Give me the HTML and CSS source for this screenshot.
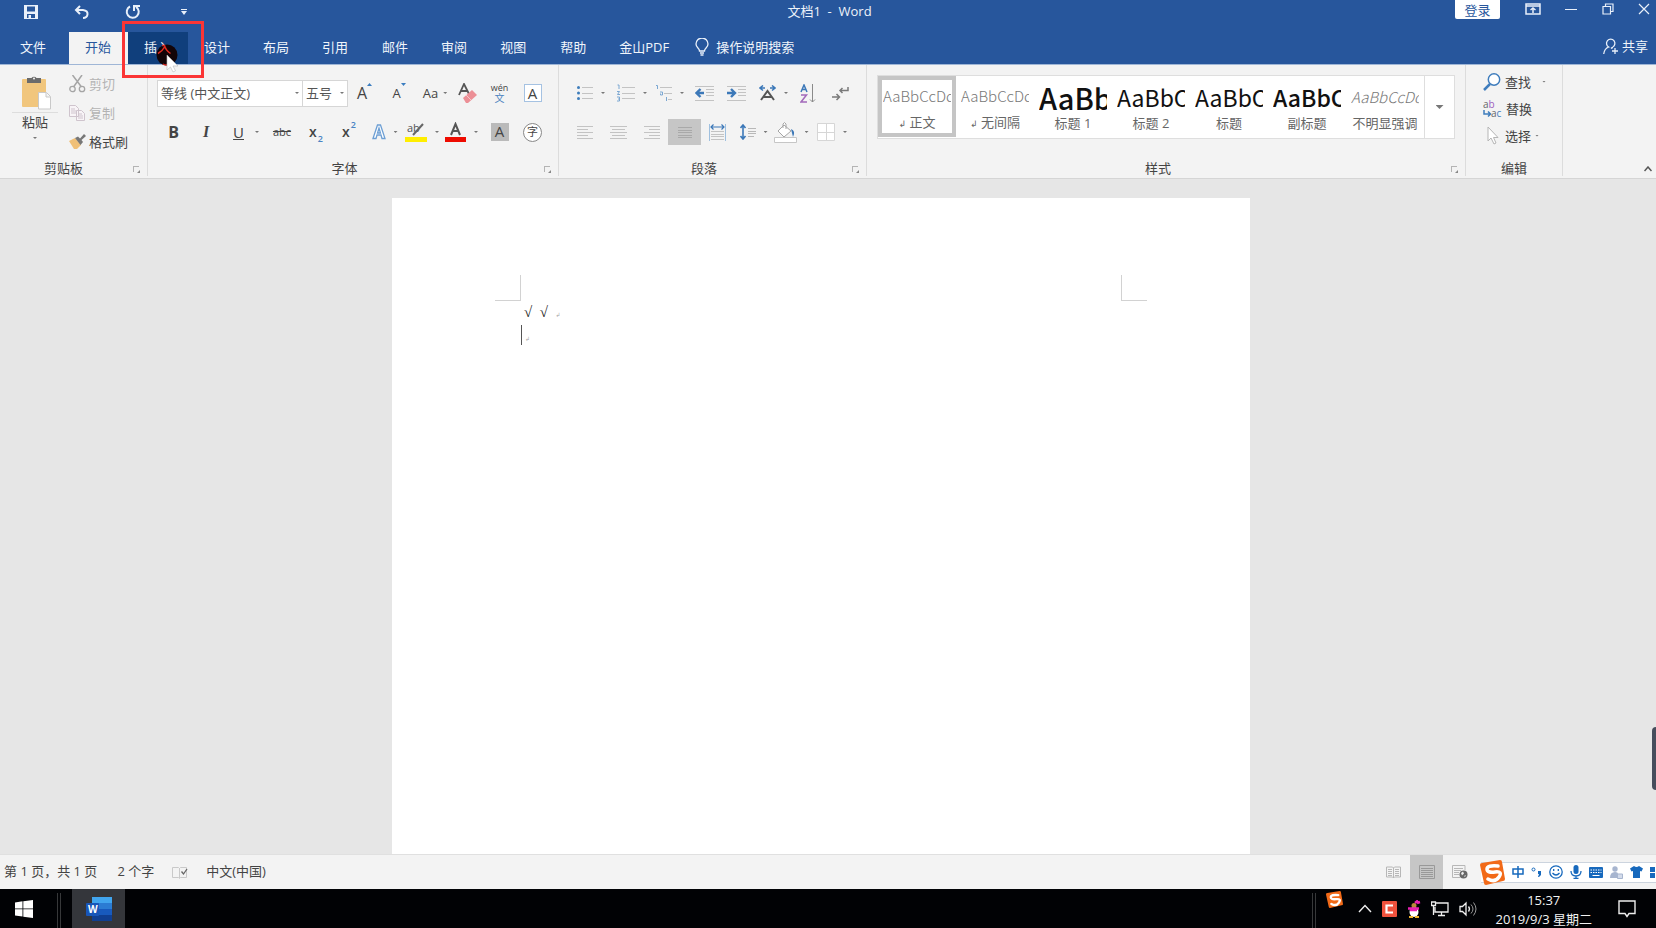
FILE: index.html
```html
<!DOCTYPE html>
<html lang="zh-CN">
<head>
<meta charset="utf-8">
<title>文档1 - Word</title>
<link rel="stylesheet" href="styles.css">
</head>
<body>
<div class="app">
<header class="titlebar">
  <div class="quick">
    <button aria-label="保存"><svg width="14" height="14" viewBox="0 0 14 14"><path fill="#e9f0fa" fill-rule="evenodd" d="M0 0H14V14H0ZM3 1.500V6.500H11V1.500ZM3 9V13H4.500V10H7V13H11V9Z"/></svg></button>
    <button aria-label="撤消"><svg width="16" height="14" viewBox="0 0 16 14"><path fill="none" stroke="#e9f0fa" stroke-width="2" d="M6 1L2 5l4 4M2 5h7c7 1 5 8 0 8"/></svg></button>
    <button aria-label="重复"><svg width="16" height="16" viewBox="0 0 16 16"><path fill="none" stroke="#e9f0fa" stroke-width="2" d="M5 2.500a6 6 0 1 0 6 .3M9 7V2h6"/></svg></button>
    <button aria-label="自定义快速访问工具栏"><svg width="6" height="6" viewBox="0 0 6 6"><path fill="#e9f0fa" d="M0 0h6v1H0zM0 2h6L3 6z"/></svg></button>
  </div>
  <h1>文档1&nbsp; -&nbsp; Word</h1>
  <div class="window">
    <button class="login">登录</button>
    <button aria-label="功能区显示选项"><svg width="16" height="12" viewBox="0 0 16 12"><path fill="none" stroke="#e9f0fa" stroke-width="1.500" d="M1 1h14v10H1zM1 3h14M8 10V5M5.500 7L8 5l2.500 2"/></svg></button>
    <button aria-label="最小化"><svg width="12" height="12" viewBox="0 0 12 12"><path stroke="#e9f0fa" d="M0 6.500h12"/></svg></button>
    <button aria-label="还原"><svg width="12" height="12" viewBox="0 0 12 12"><path fill="none" stroke="#e9f0fa" stroke-width="1.200" d="M1 3.500h7.500V11H1zM3.500 3V1H11v7.500H9"/></svg></button>
    <button aria-label="关闭"><svg width="12" height="12" viewBox="0 0 12 12"><path stroke="#e9f0fa" stroke-width="1.200" d="M1 1l10 10M11 1L1 11"/></svg></button>
  </div>
</header>
<nav class="tabs">
  <button class="file">文件</button><button class="active">开始</button><button class="hover">插入</button><button>设计</button><button>布局</button><button>引用</button><button>邮件</button><button>审阅</button><button>视图</button><button>帮助</button><button>金山PDF</button>
  <button class="tell"><svg width="14" height="18" viewBox="0 0 14 18"><path fill="none" stroke="#e9f0fa" stroke-width="1.300" d="M4.500 13c0-3-3.500-3-3.500-7a6 6 0 0 1 12 0c0 4-3.500 4-3.500 7zM5 15h4M5.500 17h3"/></svg>操作说明搜索</button>
  <button class="share"><svg width="16" height="17" viewBox="0 0 16 17"><path fill="none" stroke="#e9f0fa" stroke-width="1.300" d="M.7 16c.5-4 2-6 5-7a4.200 4.200 0 1 1 4 0M8 10.500c1-1 1.500-1 2-1M12 10v6M9 13h6"/></svg>共享</button>
  <div class="highlight-box"></div>
  <svg class="pointer" width="24" height="34" viewBox="0 0 24 34"><circle cx="11" cy="12" r="10.500" fill="#130508"/><path fill="none" stroke="#e02a20" stroke-width="1.500" d="M6 2.500h2.500c1 4 3 6 6 8M8.500 4C7 7 5 9 2 10.500M7 21q3 2 6 0"/><path fill="#fff" stroke="#bbb" stroke-width=".6" d="M11 12v15l3.500-3 2.500 5 2.500-1.200-2.500-4.800H22z"/></svg>
</nav>
<section class="ribbon">
  <div class="group clipboard">
    <div class="body">
      <button class="paste"><svg width="32" height="34" viewBox="0 0 32 34"><rect x="3" y="3" width="24" height="28" rx="1" fill="#f1c67d"/><path fill="#6b6b6b" d="M8 2h4.500a3 3 0 0 1 5 0H22v5H8z"/><circle cx="15" cy="2.500" r="1" fill="#f3f3f3"/><path fill="#fff" stroke="#c9c9c9" d="M19.500 16.500h8l4 4V33H19.500zM27 17v4h4"/></svg><span class="paste-label">粘贴</span><i class="arrow"></i></button>
      <div class="stack">
        <button class="dim"><svg width="17" height="18" viewBox="0 0 17 18"><path fill="none" stroke="#a5a5a5" stroke-width="1.500" d="M3.500 0l9 12M13 0L4.500 12"/><circle cx="3.500" cy="14" r="2.700" fill="none" stroke="#a5a5a5" stroke-width="1.300"/><circle cx="13" cy="14" r="2.700" fill="none" stroke="#a5a5a5" stroke-width="1.300"/></svg>剪切</button>
        <button class="dim"><svg width="17" height="18" viewBox="0 0 17 18"><path fill="#f8f4f7" stroke="#cfc4cd" d="M.5 1.500h6l3 3v8h-9zM7.500 6.500h5l3 3v7h-8zM2 5h4M2 7h5M2 9h5M9 10h4M9 12h5M9 14h5"/></svg>复制</button>
        <button><svg width="17" height="16" viewBox="0 0 17 16"><path fill="#f0c078" d="M0 7l6-3 6 7-4 4H5z"/><path fill="#777" d="M6 4l3-1.500 2 2L15 0l2 2-4.500 4 1.500 2-2.500 3z"/></svg>格式刷</button>
      </div>
    </div>
    <footer>剪贴板<i class="launcher"></i></footer>
  </div>
  <div class="group font">
    <div class="body column">
      <div class="tools font-one">
        <div class="combo"><input class="family" aria-label="字体" value="等线 (中文正文)"><i class="arrow"></i></div>
        <div class="combo"><input class="size" aria-label="字号" value="五号"><i class="arrow"></i></div>
        <button class="a-up" aria-label="增大字号">A<svg width="5" height="3" viewBox="0 0 5 3"><path fill="#3b7dc0" d="M0 3h5L2.500 0z"/></svg></button>
        <button class="a-down" aria-label="减小字号">A<svg width="5" height="3" viewBox="0 0 5 3"><path fill="#3b7dc0" d="M0 0h5L2.500 3z"/></svg></button>
        <button class="aa">Aa<i class="arrow"></i></button>
        <button aria-label="清除格式"><svg width="20" height="20" viewBox="0 0 20 20"><path fill="none" stroke="#555" stroke-width="1.800" d="M1 12L6 1l5 10M3 8h6"/><path fill="#ec8f96" d="M5 15l9-8 5 5-9 8H8z"/><path stroke="#f7c5c9" d="M8 12l5 5"/></svg></button>
        <button class="pinyin"><small>wén</small><b>文</b></button>
        <button><span class="boxed">A</span></button>
      </div>
      <div class="tools font-two">
        <button class="bold">B</button><button class="italic">I</button><button class="under"><u>U</u><i class="arrow"></i></button>
        <button class="strike"><s>abc</s></button><button class="script">x<sub>2</sub></button><button class="script">x<sup>2</sup></button>
        <button aria-label="文本效果"><svg width="14" height="16" viewBox="0 0 14 16"><path fill="#fff" stroke="#6d9fd4" stroke-width="1.300" d="M1 14.500L5.500 1h3L13 14.500h-3L9 11H5l-1 3.500zM5.500 9h3L7 4z"/></svg><i class="arrow"></i></button>
        <button aria-label="突出显示"><svg width="22" height="20" viewBox="0 0 22 20"><text x="2" y="10" font-size="11" fill="#555">ab</text><path stroke="#666" stroke-width="2" d="M18 2L8 13"/><path fill="#ffee00" d="M0 15h22v5H0z"/></svg><i class="arrow"></i></button>
        <button aria-label="字体颜色"><svg width="21" height="20" viewBox="0 0 21 20"><path fill="none" stroke="#555" stroke-width="2" d="M6 13L10.500 2 15 13M7.500 9h6"/><path fill="#ee0b00" d="M0 15h21v5H0z"/></svg><i class="arrow"></i></button>
        <button><span class="shaded">A</span></button><button><span class="circled">字</span></button>
      </div>
    </div>
    <footer>字体<i class="launcher"></i></footer>
  </div>
  <div class="group paragraph">
    <div class="body column">
      <div class="tools para-one">
        <button aria-label="项目符号"><svg width="16" height="14" viewBox="0 0 16 14"><path stroke="#c3c3c3" d="M5 1.500h11M5 7.500h11M5 12.500h11"/><g fill="#3e7dbb"><circle cx="1.500" cy="1.500" r="1.500"/><circle cx="1.500" cy="7" r="1.500"/><circle cx="1.500" cy="12.500" r="1.500"/></g></svg><i class="arrow"></i></button>
        <button aria-label="编号"><svg width="18" height="18" viewBox="0 0 18 18"><path stroke="#c3c3c3" d="M5 3.500h13M5 9.500h13M5 14.500h13"/><path fill="none" stroke="#7ba7d2" d="M.5 1H2v4M0 7.500h2.500L.5 10.500H3M0 13h2.500v4H0M1 15h1.500"/></svg><i class="arrow"></i></button>
        <button aria-label="多级列表"><svg width="16" height="18" viewBox="0 0 16 18"><path stroke="#c3c3c3" d="M4 3.500h12M8 9.500h8M12 15.500h4"/><path fill="none" stroke="#7ba7d2" d="M0 1.500h1.500V5M4 8h2.500v3H4.500V9.500M10.500 13v4"/></svg><i class="arrow"></i></button>
        <button aria-label="减少缩进量"><svg width="19" height="15" viewBox="0 0 19 15"><path stroke="#c3c3c3" d="M0 .5h19M11 3.500h8M11 6.500h8M11 9.500h8M0 14.500h19"/><path fill="none" stroke="#3c78b8" stroke-width="2.400" d="M5.500 3L1.500 7l4 4M2 7h7"/></svg></button>
        <button aria-label="增加缩进量"><svg width="19" height="15" viewBox="0 0 19 15"><path stroke="#c3c3c3" d="M0 .5h19M11 3.500h8M11 6.500h8M11 9.500h8M0 14.500h19"/><path fill="none" stroke="#3c78b8" stroke-width="2.400" d="M4 3l4 4-4 4M0 7h7"/></svg></button>
        <button aria-label="中文版式"><svg width="17" height="16" viewBox="0 0 17 16"><path fill="none" stroke="#3c78b8" stroke-width="1.500" d="M4 .5L1 3l3 2.500M1 3h5M13 .500l3 2.500-3 2.500M16 3h-5"/><path fill="none" stroke="#555" stroke-width="2" d="M2 15L8.500 6 15 15M4.500 12h8"/></svg><i class="arrow"></i></button>
        <button aria-label="排序"><svg width="16" height="19" viewBox="0 0 16 19"><path fill="none" stroke="#3c78b8" stroke-width="1.500" d="M1 8L4 1l3 7M2 5.500h4"/><path fill="none" stroke="#a269bb" stroke-width="1.500" d="M1 11h5.500L1 18h6"/><path fill="none" stroke="#8a8a8a" d="M12.500 0v18M10 15.500l2.500 2.500 2.500-2.500"/></svg></button>
        <button aria-label="显示编辑标记"><svg width="17" height="15" viewBox="0 0 17 15"><path fill="none" stroke="#7a7a7a" stroke-width="1.500" d="M16 1v3.500H8M10.500 2L8 4.500 10.500 7M0 11h7M4.500 8L7.500 11l-3 3"/></svg></button>
      </div>
      <div class="tools para-two">
        <button aria-label="左对齐"><svg width="16" height="13" viewBox="0 0 16 13"><path stroke="#c3c3c3" d="M0 .5h16M0 3.500h11M0 6.500h16M0 9.500h11M0 12.500h16"/></svg></button>
        <button aria-label="居中"><svg width="17" height="13" viewBox="0 0 17 13"><path stroke="#c3c3c3" d="M0 .5h17M2 3.500h13M0 6.500h17M2 9.500h13M0 12.500h17"/></svg></button>
        <button aria-label="右对齐"><svg width="16" height="13" viewBox="0 0 16 13"><path stroke="#c3c3c3" d="M0 .5h16M5 3.500h11M0 6.500h16M5 9.500h11M0 12.500h16"/></svg></button>
        <button class="pressed" aria-label="两端对齐"><svg width="14" height="11" viewBox="0 0 14 11"><path stroke="#a9a9a9" d="M0 .5h14M0 3.500h14M0 5.500h14M0 8.500h14M0 10.500h14"/></svg></button>
        <button aria-label="分散对齐"><svg width="17" height="17" viewBox="0 0 17 17"><path stroke="#c3c3c3" d="M2 7.500h13M2 10.500h13M2 12.500h13M2 15.500h13"/><path stroke="#9fc0df" d="M.5 0v17M16.500 0v17"/><path fill="none" stroke="#3c78b8" stroke-width="1.200" d="M2 3h13M4.500 .5L2 3l2.500 2.500M12.500 .500L15 3l-2.500 2.500"/></svg></button>
        <button aria-label="行距"><svg width="16" height="16" viewBox="0 0 16 16"><path stroke="#b8b8b8" d="M8 4.500h8M8 7.500h8M8 9.500h8M8 12.500h6"/><path fill="none" stroke="#3c78b8" stroke-width="1.600" d="M3 1v14M.500 4L3 1l2.500 3M.5 12L3 15l2.500-3"/></svg><i class="arrow"></i></button>
        <button aria-label="底纹"><svg width="23" height="21" viewBox="0 0 23 21"><path fill="#fff" stroke="#a5a5a5" d="M10 3l7 6-7 6-6-6zM9 6V2q1.500-3 3 0v5"/><path fill="#3c78b8" d="M17 7q5 2 2 8l-1-4z"/><path fill="#fff" stroke="#c6c6c6" d="M.5 15.500h22v5H.5z"/></svg><i class="arrow"></i></button>
        <button aria-label="边框"><svg width="18" height="18" viewBox="0 0 18 18"><path fill="#fff" stroke="#d6d6d6" d="M.5 .5h17v17H.5zM9.500 0v18M0 9.500h18"/></svg><i class="arrow"></i></button>
      </div>
    </div>
    <footer>段落<i class="launcher"></i></footer>
  </div>
  <div class="group styles">
    <div class="body">
      <div class="gallery">
        <button class="style chosen"><span class="sample light">AaBbCcDd</span><span><small>↲</small> 正文</span></button>
        <button class="style"><span class="sample light">AaBbCcDd</span><span><small>↲</small> 无间隔</span></button>
        <button class="style"><span class="sample h1">AaBb</span><span>标题 1</span></button>
        <button class="style"><span class="sample h2">AaBbC</span><span>标题 2</span></button>
        <button class="style"><span class="sample h2">AaBbC</span><span>标题</span></button>
        <button class="style"><span class="sample h2 strong">AaBbC</span><span>副标题</span></button>
        <button class="style"><span class="sample light slant">AaBbCcDd</span><span>不明显强调</span></button>
        <button class="more" aria-label="其他样式"><i class="arrow big"></i></button>
      </div>
    </div>
    <footer>样式<i class="launcher"></i></footer>
  </div>
  <div class="group editing">
    <div class="body stack">
      <button><svg width="18" height="18" viewBox="0 0 18 18"><circle cx="11" cy="6.500" r="5.700" fill="#fff" stroke="#3f7dbd" stroke-width="1.500"/><path stroke="#3f7dbd" stroke-width="2.500" d="M7 11L1 17"/></svg>查找<i class="arrow far"></i></button>
      <button><svg width="19" height="18" viewBox="0 0 19 18"><text x="0" y="8" font-size="10" fill="#666">a<tspan fill="#a05fc0">b</tspan></text><text x="8" y="17" font-size="10" fill="#666">a<tspan fill="#3f7dbd">c</tspan></text><path fill="none" stroke="#3f7dbd" stroke-width="1.500" d="M1 10v4h6M5 11.500L7.500 14 5 16.500"/></svg>替换</button>
      <button><svg width="18" height="19" viewBox="0 0 18 19"><path fill="#fff" stroke="#b5b5b5" d="M5 1v14l3-3 3 6 2-1-2.500-5.500H15z"/></svg>选择<i class="arrow"></i></button>
    </div>
    <footer>编辑</footer>
  </div>
  <button class="collapse" aria-label="折叠功能区"><svg width="8" height="6" viewBox="0 0 8 6"><path fill="none" stroke="#555" stroke-width="1.500" d="M.500 5L4 1l3.500 4"/></svg></button>
</section>
<main class="workspace">
  <article class="page">
    <div class="margins"><i></i><i></i></div>
    <p>√&nbsp; √&nbsp; <small>↲</small></p>
    <p class="caret"><small>↲</small></p>
  </article>
  <div class="side-handle"></div>
</main>
<footer class="status">
  <span>第 1 页，共 1 页</span><span>2 个字</span>
  <svg width="16" height="13" viewBox="0 0 16 13"><path fill="none" stroke="#c9c9c9" d="M.5 1.500h6l1 1 1-1h6v10h-6l-1 1-1-1h-6zM7.500 2v10"/><path fill="none" stroke="#666" stroke-width="1.300" d="M9.500 5.500l2 2.500L15 3"/></svg>
  <span>中文(中国)</span>
  <div class="views">
    <button aria-label="阅读视图"><svg width="15" height="13" viewBox="0 0 15 13"><path fill="none" stroke="#b7b7b7" d="M.5 1h6l1 1 1-1h6v10h-6l-1 1-1-1h-6zM7.500 2v10M2 3.500h4M2 5.500h4M2 7.500h4M2 9.500h4M9 3.500h4M9 5.500h4M9 7.500h4M9 9.500h4"/></svg></button>
    <button class="on" aria-label="页面视图"><svg width="16" height="14" viewBox="0 0 16 14"><path fill="none" stroke="#999" d="M.5 .5h15v13H.5zM2 3.500h12M2 5.500h12M2 7.500h12M2 9.500h12M2 11.500h12"/></svg></button>
    <button aria-label="Web 版式视图"><svg width="16" height="14" viewBox="0 0 16 14"><path fill="none" stroke="#b7b7b7" d="M13 5V.5H.5v12H8M2 3.500h9M2 5.500h7M2 7.500h5M2 9.500h5"/><circle cx="11.500" cy="9.500" r="4" fill="#666"/><path fill="#eee" d="M9 8l2-1.500 1 2-2 2zM12 11l2-1-1 2z"/></svg></button>
  </div>
  <div class="ime">
    <svg class="sogou" width="25" height="25" viewBox="0 0 25 25"><use href="#sogou-mark"/></svg>
    <svg width="12" height="12" viewBox="0 0 12 12"><path fill="none" stroke="#1769bd" stroke-width="1.500" d="M1 3h10v5H1zM6 0v12"/></svg>
    <svg width="11" height="11" viewBox="0 0 11 11"><circle cx="2.500" cy="2.500" r="1.500" fill="none" stroke="#1769bd"/><path fill="#1769bd" d="M7 4h3v4l-2 2H7l1-3H7z"/></svg>
    <svg width="14" height="14" viewBox="0 0 14 14"><circle cx="7" cy="7" r="6.200" fill="none" stroke="#1769bd" stroke-width="1.300"/><path fill="none" stroke="#1769bd" stroke-width="1.300" d="M4.700 4v2M9.300 4v2M3.500 8q3.500 4 7 0"/></svg>
    <svg width="12" height="14" viewBox="0 0 12 14"><rect x="3.500" width="5" height="9" rx="2.500" fill="#1769bd"/><path fill="none" stroke="#1769bd" stroke-width="1.300" d="M1 6q0 5 5 5t5-5M6 11v3M3.500 13.500h5"/></svg>
    <svg width="14" height="11" viewBox="0 0 14 11"><rect width="14" height="11" rx="1" fill="#1769bd"/><path stroke="#fff" stroke-dasharray="1.500 1" d="M1.500 3h11M1.500 5.500h11"/><path stroke="#fff" d="M3.500 8.500h7"/></svg>
    <svg width="13" height="13" viewBox="0 0 13 13"><circle cx="5" cy="3" r="2.700" fill="#a7b5cf"/><path fill="#a7b5cf" d="M0 12q0-6 5-6 3 0 3 2v4z"/><path fill="#d3dbea" stroke="#a7b5cf" d="M7.500 8h5v4.500h-5z"/></svg>
    <svg width="13" height="12" viewBox="0 0 13 12"><path fill="#1769bd" d="M4 0q2.500 2 5 0l4 2.500-1.500 3L10 5v7H3V5l-1.500.5L0 2.500z"/></svg>
    <svg width="11" height="11" viewBox="0 0 11 11"><path fill="#1769bd" d="M0 0h5v5H0zM6 0h5v5H6zM0 6h5v5H0zM6 6h5v5H6z"/></svg>
  </div>
</footer>
<footer class="taskbar">
  <button class="start" aria-label="开始菜单"><svg width="18" height="18" viewBox="0 0 18 18"><path fill="#fff" d="M0 2.500L7.500 1.300V8.500H0zM8.300 1.200L18 0v8.500H8.300zM0 9.300h7.500v7.300L0 15.500zM8.300 9.300H18V18L8.300 16.700z"/></svg></button>
  <div class="rails"></div>
  <button class="word" aria-label="Word"><svg width="26" height="24" viewBox="0 0 26 24"><rect x="6" width="20" height="6" fill="#41a5ee"/><rect x="6" y="6" width="20" height="6" fill="#2b7cd3"/><rect x="6" y="12" width="20" height="6" fill="#185abd"/><rect x="6" y="18" width="20" height="6" fill="#103f91"/><rect y="6" width="13" height="13" rx="1" fill="#1856b8"/><text x="2" y="16" font-size="10" font-weight="700" fill="#fff">W</text></svg></button>
  <div class="tray">
    <div class="rails"></div>
    <svg class="tray-sogou" width="17" height="17" viewBox="0 0 25 25"><g id="sogou-mark"><path fill="#f26a18" d="M0 5Q0 3 2 3L20 0q2 0 2 2l3 17q0 2-2 2L6 25q-2 0-2-2z"/><path fill="none" stroke="#fff" stroke-width="3.500" stroke-linecap="round" d="M18 6Q7 5 7 9t8 3 4 5-11 2"/></g></svg>
    <svg width="14" height="9" viewBox="0 0 14 9"><path fill="none" stroke="#eee" stroke-width="1.400" d="M1 8l6-6.500L13 8"/></svg>
    <svg width="15" height="16" viewBox="0 0 15 16"><rect width="15" height="16" rx="1" fill="#f0523d"/><path fill="none" stroke="#fff" stroke-width="2.200" d="M11 4.500H4.500v7H11"/></svg>
    <svg width="14" height="18" viewBox="0 0 14 18"><ellipse cx="7" cy="12" rx="4.500" ry="5" fill="#fff"/><circle cx="7" cy="5.500" r="2.500" fill="#b98a3a"/><path stroke="#e71fb0" stroke-width="2.500" d="M1 8.500h11M3 10h7M8 3l3-2.500M10 3l3-1"/><path stroke="#efb22b" stroke-width="2" d="M2 17h4M8 17h4"/></svg>
    <svg width="18" height="16" viewBox="0 0 18 16"><path fill="none" stroke="#eee" stroke-width="1.300" d="M5 2h12v9H4V6M7 14.500h7M10.500 11v3M.5 1h4v3.500h-4zM2.500 5v9"/></svg>
    <svg width="19" height="16" viewBox="0 0 19 16"><path fill="none" stroke="#eee" stroke-width="1.300" d="M1 5.500h2.500L7 2v12l-3.500-3.500H1zM9.500 5.500q2 2.500 0 5"/><path fill="none" stroke="#999" d="M12 3.500q4 4.500 0 9M14.500 1.500q5 6.500 0 13"/></svg>
    <time>15:37<br>2019/9/3 星期二</time>
    <svg width="18" height="18" viewBox="0 0 18 18"><path fill="none" stroke="#eee" stroke-width="1.400" d="M1 1h16v12.500h-6L9 16.500 7 13.500H1z"/></svg>
  </div>
</footer>
</div>
</body>
</html>
```

FILE: styles.css
```css
* { box-sizing: border-box; }
body { margin: 0; }
body, button, input { font: 13px/18px "Open Sans", "Noto Sans CJK SC", sans-serif; color: #444; }
button { display: flex; align-items: center; justify-content: center; padding: 0; border: 0; background: none; white-space: nowrap; }
svg { display: block; flex: none; }
p, h1 { margin: 0; }
.app { display: flex; flex-direction: column; height: 100vh; overflow: hidden; background: #e6e6e6; }

.titlebar { display: grid; grid-template-columns: 1fr auto 1fr; height: 32px; background: #27569c; }
.titlebar button, .titlebar h1 { height: 23px; color: #eef3fa; }
.titlebar h1 { padding-left: 3px; font-size: 13px; font-weight: 400; line-height: 23px; }
.quick { display: flex; padding-left: 6px; }
.quick button { width: 50px; }
.quick button:nth-child(n + 2) { width: 51px; }
.window { display: flex; justify-content: flex-end; }
.window button { width: 37px; height: 18px; }
.window .login { width: 45px; height: 19px; margin-right: 13px; border-radius: 0 0 2px 2px; background: #fff; color: #27569c; }
.window button:last-child { justify-content: flex-end; width: 30px; padding-right: 6px; }
.window button:nth-child(2) { width: 39px; }

.tabs { position: relative; display: flex; height: 33px; padding-right: 5px; background: #27569c; border-bottom: 1px solid #9fb6d6; }
.tabs button { padding: 0 17px 3px 16px; color: #f0f5fb; }
.tabs button:nth-child(3n) { padding-right: 18px; }
.tabs .file { padding-left: 20px; padding-right: 23px; }
.tabs .active { background: #f3f3f3; color: #27569c; }
.tabs .hover { background: #103f7c; }
.tabs .tell { gap: 7px; padding-left: 9px; }
.tabs .share { gap: 3px; margin-left: auto; padding: 0 3px 4px 0; }
.highlight-box { position: absolute; left: 122px; top: -11px; width: 82px; height: 57px; border: 3px solid #fb3535; z-index: 2; }
.pointer { position: absolute; left: 156px; top: 11px; z-index: 3; }

.ribbon { position: relative; display: flex; height: 114px; padding-right: 93px; background: #f3f3f3; border-bottom: 1px solid #d5d5d5; }
.group { display: flex; flex-direction: column; flex: none; margin-bottom: 2px; border-right: 1px solid #dcdcdc; }
.group .body { display: flex; flex: 1; }
.group .column { flex-direction: column; gap: 11px; padding-top: 14px; }
.group > footer { position: relative; height: 18px; padding-right: 26px; line-height: 20px; text-align: center; }
.launcher { position: absolute; right: 8px; bottom: 4px; width: 6px; height: 6px; border: solid #b4b4b4; border-width: 1px 0 0 1px; }
.launcher::after { content: ""; position: absolute; left: 3px; top: 3px; width: 3px; height: 3px; background: #888; clip-path: polygon(100% 0, 100% 100%, 0 100%); }
.arrow { flex: none; width: 4px; height: 2px; background: #777; clip-path: polygon(0 0, 100% 0, 50% 100%); }
.arrow.big { width: 8px; height: 4px; }
.clipboard { width: 148px; }
.clipboard > footer { padding-right: 20px; }
.paste { flex-direction: column; justify-content: flex-start; width: 46px; margin: 11px 11px 0 12px; }
.paste-label { width: 100%; margin-top: 2px; border-top: 1px solid #ddd; }
.paste .arrow { margin-top: 6px; }
.stack { display: flex; flex-direction: column; }
.stack button { justify-content: flex-start; gap: 4px; }
.clipboard .stack { padding-top: 4px; }
.clipboard .stack button { gap: 3px; height: 29px; }
.clipboard .dim { color: #b3b3b3; }
.font { width: 411px; padding-left: 9px; }
.tools { display: grid; height: 28px; align-items: center; }
.tools button { height: 26px; gap: 7px; }
.font-one { grid-template-columns: 146px 45px 33px 36px 36px 30px 33px 33px; }
.combo { display: flex; align-items: center; height: 27px; padding-right: 3px; border: 1px solid #d6d6d6; background: #fff; }
.combo + .combo { border-left: 0; }
.combo input { flex: 1; min-width: 0; padding: 0 0 0 3px; border: 0; background: none; color: #555; }
.a-up, .a-down { font-size: 16px; }
.tools .a-up, .tools .a-down { gap: 0; }
.a-down { font-size: 13px; }
.a-up svg, .a-down svg { align-self: flex-start; margin-top: 3px; }
.tools .aa { gap: 5px; }
.tools .pinyin { flex-direction: column; gap: 0; }
.pinyin small { font-size: 9px; line-height: 10px; }
.pinyin b { color: #4c84c0; font-size: 10px; font-weight: 400; line-height: 10px; }
.boxed, .shaded { width: 18px; height: 18px; font-size: 15px; line-height: 16px; text-align: center; }
.boxed { border: 1px solid #a5c2e2; background: #fff; }
.shaded { background: #bababa; }
.circled { width: 19px; height: 19px; border: 1px solid #888; border-radius: 50%; background: #fff; font-size: 11px; line-height: 16px; }
.font-two { grid-template-columns: 33px 32px 43px 34px 34px 32px 39px 36px 43px 33px 33px; }
.bold { font-size: 16px; font-weight: 700; }
.italic { font: italic 700 16px/18px "Liberation Serif", serif; }
.under { font-size: 15px; }
.tools .under { justify-content: flex-end; gap: 11px; padding-right: 6px; }
.strike { font-size: 11px; }
.tools .script { gap: 1px; font-size: 14px; font-weight: 600; }
.script sub, .script sup { color: #4a84c4; font-size: 9px; line-height: 12px; }
.script sub { align-self: flex-end; }
.script sup { align-self: flex-start; }
.paragraph { width: 308px; padding-left: 9px; }
.tools svg + .arrow { margin-left: 1px; }
.para-one { grid-template-columns: 46px 36px 40px 29px 34px 41px 28px 37px; }
.para-two { grid-template-columns: 34px 33px 33px 33px 32px 41px 34px 48px; }
.pressed { background: #c6c6c6; }
.styles { flex: 1 1 600px; min-width: 0; padding-left: 10px; }
.styles .body { padding: 10px 10px 0 0; }
.gallery { display: flex; width: 100%; height: 64px; border: 1px solid #dedede; background: #fff; }
.style { flex: 1; min-width: 0; flex-direction: column; height: 61px; color: #666; }
.chosen { box-shadow: inset 0 0 0 4px #c5c5c5; }
.style span { line-height: 20px; }
.style small { font: 9px/18px "DejaVu Sans", sans-serif; }
.style .sample { width: 68px; height: 32px; overflow: hidden; text-align: left; line-height: 32px; color: #111; font-family: "Noto Sans CJK SC", sans-serif; }
.style .light { font-size: 15px; font-weight: 300; color: #777; }
.style .h1 { font-size: 29px; font-weight: 500; }
.style .h2 { font-size: 23px; }
.style .strong { font-weight: 500; }
.style .slant { font-style: italic; }
.more { width: 30px; height: 62px; border-left: 1px solid #dedede; }
.editing { width: 97px; }
.editing > footer { padding-right: 0; }
.editing .body { padding: 3px 0 0 17px; }
.editing .stack button, .editing button { height: 27px; }
.editing .far { margin-left: 7px; }
.collapse { position: absolute; right: 4px; bottom: 6px; }

.workspace { position: relative; flex: 1; min-height: 0; padding: 19px 406px 0 392px; overflow: hidden; }
.page { height: 100%; padding: 77px 103px 0; background: #fff; color: #222; }
.margins { display: flex; justify-content: space-between; height: 26px; }
.margins i { width: 26px; border: solid #d2d2d2; border-width: 0 1px 1px 0; }
.margins i:last-child { border-width: 0 0 1px 1px; }
.page p { height: 23px; margin-left: 29px; font: 15px/23px "Liberation Serif", "Noto Sans CJK SC", serif; }
.page small { color: #aaa; font: 6px/10px "DejaVu Sans", sans-serif; }
.page .caret { height: 20px; margin: 1px 0 0 26px; padding-left: 3px; border-left: 1px solid #555; }
.side-handle { position: absolute; right: 0; bottom: 64px; width: 4px; height: 63px; border-radius: 4px 0 0 4px; background: #464d5c; }

.status { display: flex; align-items: center; gap: 18px; height: 35px; padding-left: 4px; background: #f3f3f3; border-top: 1px solid #e0e0e0; }
.status span { padding-bottom: 2px; }
.status span:first-child { padding-right: 2px; }
.views { display: flex; margin-left: auto; height: 100%; }
.views button { width: 33px; }
.views .on { background: #c6c6c6; }
.ime { display: flex; align-items: center; gap: 7px; height: 21px; margin: 0 -5px 0 -13px; border: solid #ccd4de; border-width: 1px 0; background: #fff; }
.sogou { margin-left: -1px; }

.taskbar { display: flex; height: 39px; background: #010205; }
.start { width: 48px; }
.rails { width: 4px; margin: 4px 11px 0 9px; border: solid #37383a; border-width: 0 1px; }
.word { width: 53px; background: #34363b; }
.tray { display: flex; align-items: center; gap: 10px; margin-left: auto; padding-right: 20px; color: #f2f2f2; }
.tray .rails { align-self: stretch; margin-right: 0; }
.tray-sogou { align-self: flex-start; margin: 2px 5px 0 0; }
time { margin: 3px 16px 0 7px; text-align: center; line-height: 19px; }
```
